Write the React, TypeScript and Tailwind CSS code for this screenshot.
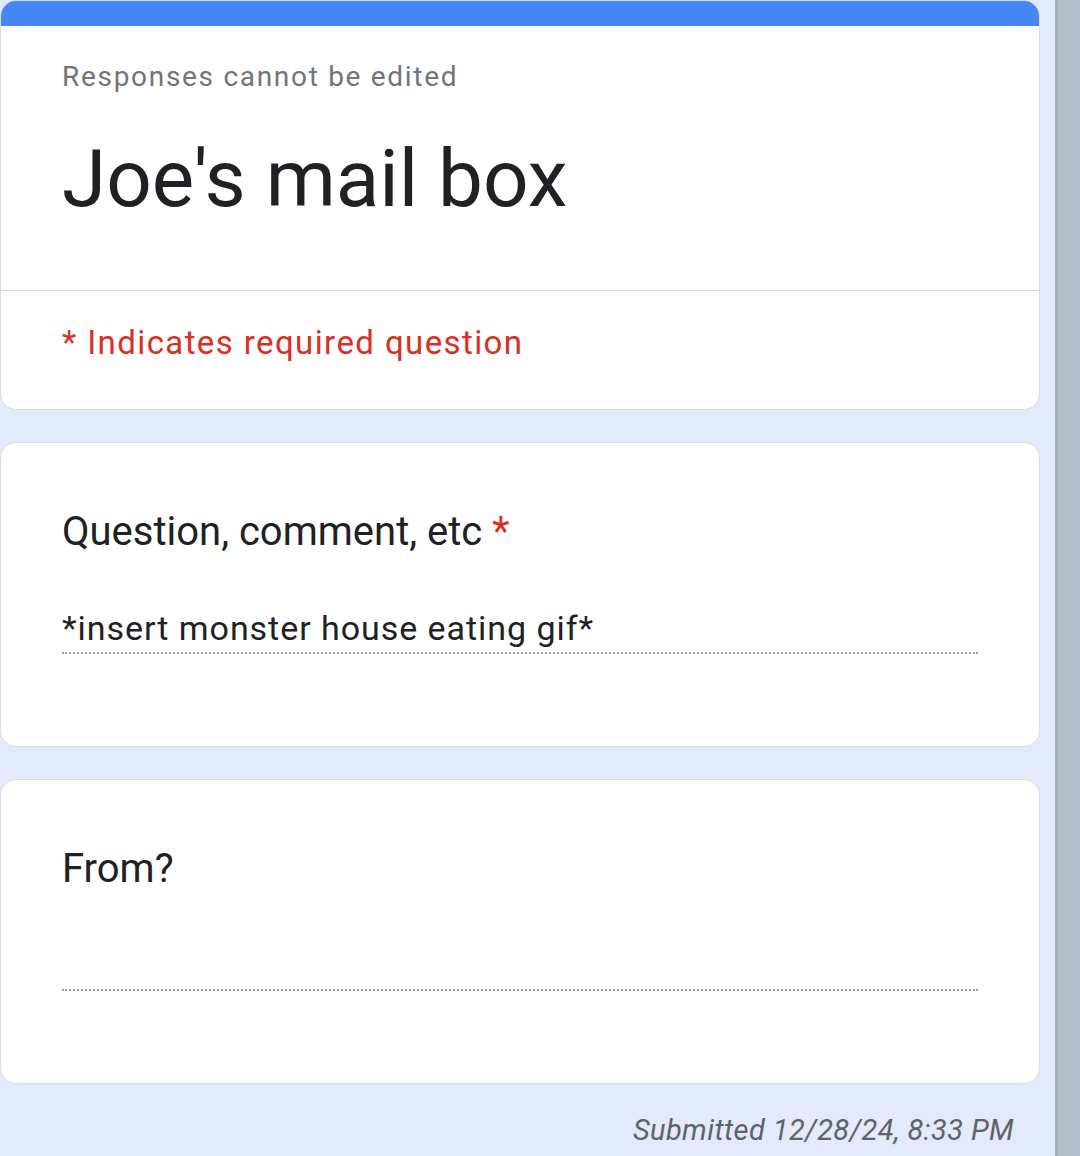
import React from 'react';

const AnswerLine: React.FC<{ value?: string }> = ({ value }) => (
  <div className="mr-[61px] mt-[52px] border-b-2 border-dotted border-[#9a9da1] pb-[4px]">
    <div className="h-[40px] text-[34px] leading-[40px] tracking-[0.95px] text-[#202124]">{value}</div>
  </div>
);

const QuestionCard: React.FC<{ title: string; required?: boolean; value?: string }> = ({ title, required, value }) => (
  <div className="rounded-[16px] border border-[#dadce0] bg-white pb-[92px] pl-[61px] pt-[65px]">
    <div className="text-[40px] leading-[48px] text-[#202124]">
      {title}
      {required && <span className="text-[#d93025]"> *</span>}
    </div>
    <AnswerLine value={value} />
  </div>
);

export default function App() {
  return (
    <div className="flex min-h-[1156px] w-full bg-[#e2eafc] font-['Roboto',sans-serif]">
      <div className="flex w-[1040px] flex-col gap-[32px]">
        {/* header card */}
        <div className="overflow-hidden rounded-[16px] border border-[#dadce0] bg-white">
          <div className="h-[25px] bg-[#4586f5]" />
          <div className="border-b border-[#dadce0] pb-[63px] pl-[61px] pt-[33px]">
            <div className="text-[28px] leading-[36px] tracking-[1.7px] text-[#70757a]">Responses cannot be edited</div>
            <h1 className="mt-[36px] text-[80px] leading-[96px] text-[#202124]">Joe's mail box</h1>
          </div>
          <div className="pb-[46px] pl-[61px] pt-[32px] text-[33px] leading-[40px] tracking-[1.4px] text-[#d93025]">
            * Indicates required question
          </div>
        </div>

        <QuestionCard title="Question, comment, etc" required value="*insert monster house eating gif*" />
        <QuestionCard title="From?" />

        <div className="-mt-[4px] pr-[26px] text-right text-[29px] italic leading-[36px] tracking-[0.4px] text-[#5f6368]">
          Submitted 12/28/24, 8:33 PM
        </div>
      </div>
      <div className="flex-1" />
      <div className="w-[25px] border-l-[3px] border-[#a7aebc] bg-[#b5bccb]" />
    </div>
  );
}
